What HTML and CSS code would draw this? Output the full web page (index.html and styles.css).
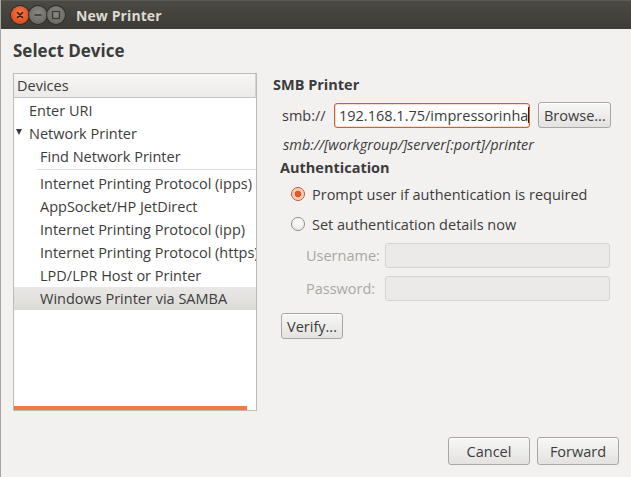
FILE: index.html
```html
<!DOCTYPE html>
<html>
<head>
<meta charset="utf-8">
<link rel="stylesheet" href="styles.css">
</head>
<body>
<div class="window">
  <div class="titlebar">
    <div class="wbtns">
      <span class="wb close"><svg width="10" height="10" viewBox="0 0 10 10"><path d="M2.5 2.5L7.5 7.5M7.5 2.5L2.5 7.5" stroke="#3a1a10" stroke-width="1.6" stroke-linecap="round"/></svg></span>
      <span class="wb mini"><svg width="10" height="10" viewBox="0 0 10 10"><path d="M1.5 5H8.5" stroke="#3b3a36" stroke-width="1.6"/></svg></span>
      <span class="wb maxi"><svg width="10" height="10" viewBox="0 0 10 10"><rect x="1.5" y="1.5" width="7" height="7" fill="none" stroke="#3b3a36" stroke-width="1.3"/></svg></span>
    </div>
    <div class="title">New Printer</div>
  </div>
  <div class="content">
    <h1 class="heading">Select Device</h1>
    <div class="main">
      <div class="devices">
        <div class="dev-header">Devices</div>
        <ul class="dev-list">
          <li class="lvl0">Enter URI</li>
          <li class="lvl0 exp"><span class="arrow"></span>Network Printer</li>
          <li class="lvl1">Find Network Printer</li>
          <li class="sep"></li>
          <li class="lvl1">Internet Printing Protocol (ipps)</li>
          <li class="lvl1">AppSocket/HP JetDirect</li>
          <li class="lvl1">Internet Printing Protocol (ipp)</li>
          <li class="lvl1">Internet Printing Protocol (https)</li>
          <li class="lvl1">LPD/LPR Host or Printer</li>
          <li class="lvl1 selected">Windows Printer via SAMBA</li>
        </ul>
        <div class="hscroll"></div>
      </div>
      <div class="panel">
        <div class="section-title">SMB Printer</div>
        <div class="uri-row">
          <span class="label">smb://</span>
          <div class="entry focused">192.168.1.75/impressorinha<span class="caret"></span></div>
          <button class="btn browse">Browse...</button>
        </div>
        <div class="hint">smb://[workgroup/]server[:port]/printer</div>
        <div class="section-title auth">Authentication</div>
        <div class="radio-row first"><span class="radio on"></span>Prompt user if authentication is required</div>
        <div class="radio-row"><span class="radio"></span>Set authentication details now</div>
        <div class="cred-grid">
          <span class="dim">Username:</span><div class="entry disabled"></div>
          <span class="dim">Password:</span><div class="entry disabled"></div>
        </div>
        <button class="btn verify">Verify...</button>
      </div>
    </div>
    <div class="actions">
      <button class="btn act">Cancel</button>
      <button class="btn act">Forward</button>
    </div>
  </div>
</div>
</body>
</html>
```
FILE: styles.css
```css
* { box-sizing: border-box; }
html, body { margin: 0; padding: 0; }
body {
  width: 631px; height: 477px; overflow: hidden;
  font-family: "Open Sans", "Noto Sans", "DejaVu Sans", sans-serif;
  font-size: 14.5px; color: #3c3c3c;
  background: #f2f1f0;
}
.window { width: 631px; height: 477px; display: flex; flex-direction: column; border-left: 1px solid #a8a6a0; }
.titlebar {
  height: 29px; flex: none;
  background: linear-gradient(#4a4944, #3c3b37);
  display: flex; align-items: center; padding-left: 10px;
  border-top: 1px solid #5a5954;
}
.wbtns { display: flex; }
.wb { width: 18px; height: 18px; border-radius: 50%; display: flex; align-items: center; justify-content: center; }
.wb.close { background: radial-gradient(circle at 50% 40%, #f37a4a, #e0501d 70%, #b94015); box-shadow: 0 0 0 1px #2e2d2a; }
.wb.mini, .wb.maxi { background: radial-gradient(circle at 50% 40%, #8a8983, #6d6c67 70%, #5c5b56); box-shadow: 0 0 0 1px #2e2d2a; }
.title { margin-left: 11px; color: #dfdbd2; font-weight: bold; font-size: 14px; letter-spacing: 0.1px; }
.content { flex: 1; display: flex; flex-direction: column; padding: 10px 12px 12px 12px; }
.heading { margin: 0; font-size: 17px; font-weight: bold; color: #3c3c3c; line-height: 24px; }
.main { display: flex; margin-top: 10px; height: 338px; }
.devices {
  width: 244px; flex: none; background: #fff; border: 1px solid #bdbbb7;
  display: flex; flex-direction: column;
}
.dev-header {
  height: 24px; line-height: 24px; padding-left: 3px;
  background: linear-gradient(#f7f6f5, #ebeae8);
  border-bottom: 1px solid #c7c5c1; border-right: 1px solid #d5d3cf;
}
.dev-list { list-style: none; margin: 0; padding: 1px 0 0 0; flex: 1; overflow: hidden; }
.dev-list li { height: 23px; line-height: 23px; white-space: nowrap; }
.lvl0 { padding-left: 15px; }
.lvl0.exp { padding-left: 2px; display: flex; align-items: center; }
.arrow { width: 0; height: 0; border-left: 3.5px solid transparent; border-right: 3.5px solid transparent; border-top: 6px solid #3c3c3c; margin-right: 7px; margin-top: -4px; }
.lvl1 { padding-left: 26px; }
.dev-list li.sep { height: 3px; margin: 1px 0 0 23px; border-top: 1px solid #dcdad6; }
.dev-list li.selected { background: linear-gradient(#e9e8e6, #dcdbd8); }
.hscroll { height: 4px; background: #f07746; margin-right: 9px; }
.panel { flex: 1; padding-left: 16px; padding-top: 2px; }
.section-title { font-weight: bold; line-height: 20px; }
.section-title.auth { margin-left: 7px; margin-top: 0px; }
.uri-row { display: flex; align-items: center; margin-top: 7px; padding-left: 9px; }
.label { width: 52px; }
.entry { height: 25px; border: 1px solid #b5b3af; border-radius: 3px; background: #fff; line-height: 23px; padding-left: 4px; color: #3c3c3c; }
.entry.focused { width: 196px; border-color: #e0592a; box-shadow: inset 0 0 0 0.5px #f6b89c; display: flex; align-items: center; white-space: nowrap; overflow: hidden; padding-left: 4px; }
.caret { display: inline-block; width: 1px; height: 16px; background: #222; flex: none; }
.entry.disabled { background: #ebeae8; border-color: #d6d4d0; width: 225px; height: 25px; }
.btn {
  font-family: inherit; font-size: 14.5px; color: #3c3c3c;
  background: linear-gradient(#f7f7f6, #e3e2e0);
  border: 1px solid #a9a7a3; border-radius: 3px; height: 26px; padding: 0 5px;
  box-shadow: inset 0 1px 0 #ffffff;
}
.browse { margin-left: 8px; width: 73px; }
.hint { font-style: italic; margin-top: 4px; padding-left: 10px; line-height: 26px; }
.radio-row { display: flex; align-items: center; height: 30px; padding-left: 18px; }
.radio-row.first { margin-top: 1px; }
.radio { width: 14px; height: 14px; border-radius: 50%; border: 1px solid #8c8a86; background: linear-gradient(#ffffff, #ececea); margin-right: 7px; flex: none; }
.radio.on { border-color: #c4542a; background: radial-gradient(circle, #e8562a 0, #e8562a 3px, #f5c0a8 3.5px, #fbe6dc 7px); }
.cred-grid { display: grid; grid-template-columns: 79px 225px; row-gap: 8px; align-items: center; padding-left: 33px; margin-top: 4px; }
.dim { color: #a9a7a3; }
.verify { margin-left: 8px; margin-top: 12px; width: 62px; padding: 0 3px; }
.actions { display: flex; justify-content: flex-end; gap: 7px; margin-top: auto; }
.act { width: 82px; height: 28px; }
```
